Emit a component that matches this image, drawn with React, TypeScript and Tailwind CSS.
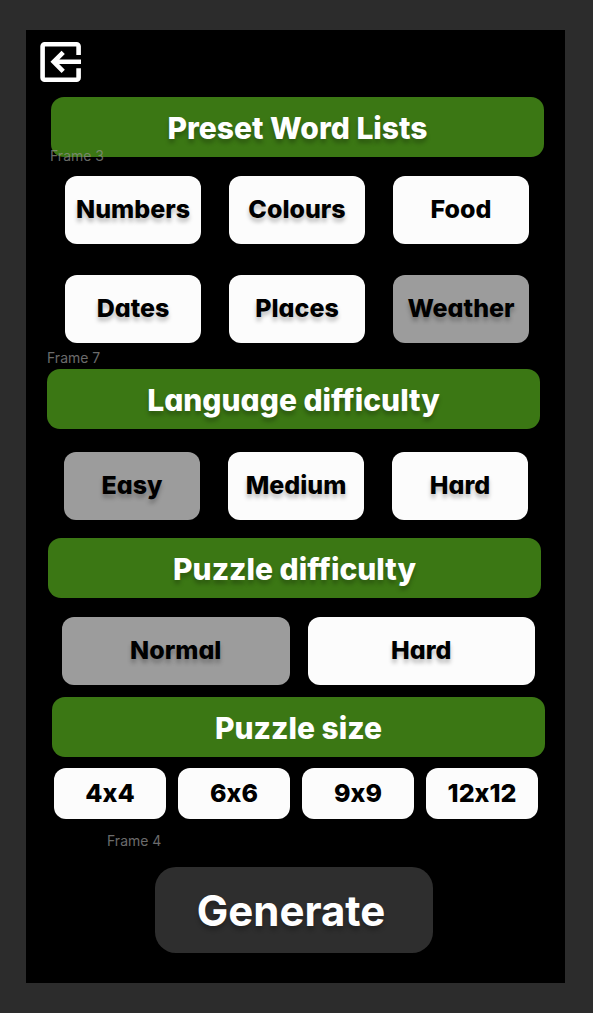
import { useState } from "react";
import clsx from "clsx";

const shadow = "[text-shadow:0_4px_4px_rgba(0,0,0,0.25)]";

type BannerProps = { title: string; className: string; flat?: boolean };

function Banner({ title, className, flat }: BannerProps) {
  return (
    <h2
      className={clsx(
        "flex h-[60px] items-center justify-center rounded-[13px] bg-[#3b7714] pt-[2px] text-[30px] font-extrabold whitespace-nowrap text-white",
        !flat && shadow,
        className,
      )}
    >
      {title}
    </h2>
  );
}

type OptionsProps = {
  label: string;
  items: string[];
  initial?: string;
  className: string;
  itemClassName: string;
  flat?: string[];
};

function Options({ label, items, initial, className, itemClassName, flat = [] }: OptionsProps) {
  const [selected, setSelected] = useState(initial);
  return (
    <div role="group" aria-label={label} className={clsx("grid", className)}>
      {items.map((item) => (
        <button
          key={item}
          type="button"
          aria-pressed={item === selected}
          onClick={() => setSelected(item)}
          className={clsx(
            "flex min-w-0 items-center justify-center rounded-xl text-[25px] font-extrabold text-black",
            item === selected ? "bg-[#9c9c9c]" : "bg-[#fcfcfc]",
            !flat.includes(item) && shadow,
            itemClassName,
          )}
        >
          {item}
        </button>
      ))}
    </div>
  );
}

const sizes = ["4x4", "6x6", "9x9", "12x12"];

export default function App() {
  return (
    <div className="min-h-screen bg-[#2c2c2c] pt-[30px] pr-7 pb-[30px] pl-[26px] font-['Inter',sans-serif]">
      <main className="flex flex-col bg-black pt-[11px] pb-[30px] [font-feature-settings:'cv11','calt'_0]">
        <button type="button" aria-label="Exit" className="ml-[14px] size-[42px]">
          <svg viewBox="0 0 42 42" className="size-full" fill="none" stroke="#fff" strokeWidth="4.6">
            <path d="M38.6 14V5.3a2 2 0 0 0-2-2H4.6a2 2 0 0 0-2 2v31.4a2 2 0 0 0 2 2h32a2 2 0 0 0 2-2V27.3" />
            <path d="M41 20.8H14M23.2 11.3 13.7 20.8l9.5 9.5" />
          </svg>
        </button>

        <div className="relative mt-[14px]">
          <Banner title="Preset Word Lists" className="mr-[21px] ml-[25px]" />
          <span className="absolute top-[49px] left-6 text-sm leading-5 text-[#8b8f88]/75 [font-feature-settings:normal]">
            Frame 3
          </span>
        </div>
        <Options
          label="Preset Word Lists"
          items={["Numbers", "Colours", "Food", "Dates", "Places", "Weather"]}
          initial="Weather"
          flat={["Food"]}
          className="mt-[19px] mr-9 ml-[39px] grid-cols-3 gap-x-7 gap-y-[31px]"
          itemClassName="h-[68px]"
        />

        <span className="mt-[5px] ml-[21px] text-sm leading-5 text-[#6b6b6b] [font-feature-settings:normal]">
          Frame 7
        </span>
        <Banner title="Language difficulty" className="mt-px mr-[25px] ml-[21px]" />
        <Options
          label="Language difficulty"
          items={["Easy", "Medium", "Hard"]}
          initial="Easy"
          className="mt-[23px] mr-[37px] ml-[38px] grid-cols-3 gap-7"
          itemClassName="h-[68px]"
        />

        <Banner title="Puzzle difficulty" className="mt-[18px] mr-6 ml-[22px]" />
        <Options
          label="Puzzle difficulty"
          items={["Normal", "Hard"]}
          initial="Normal"
          className="mt-[19px] mr-[30px] ml-9 grid-cols-2 gap-[18px]"
          itemClassName="h-[68px]"
        />

        <Banner title="Puzzle size" flat className="mt-3 mr-5 ml-[26px]" />
        <Options
          label="Puzzle size"
          items={sizes}
          flat={sizes}
          className="mt-[11px] mr-[27px] ml-7 grid-cols-4 gap-3"
          itemClassName="h-[51px]"
        />

        <span className="mt-3 ml-[81px] text-sm leading-5 text-[#6b6b6b] [font-feature-settings:normal]">
          Frame 4
        </span>
        <button
          type="button"
          className={clsx(
            "mt-4 mr-[132px] ml-[129px] h-[86px] rounded-[21px] bg-[#2e2e2e] pr-[6px] text-[42px] font-bold text-white [font-feature-settings:normal]",
            shadow,
          )}
        >
          Generate
        </button>
      </main>
    </div>
  );
}
